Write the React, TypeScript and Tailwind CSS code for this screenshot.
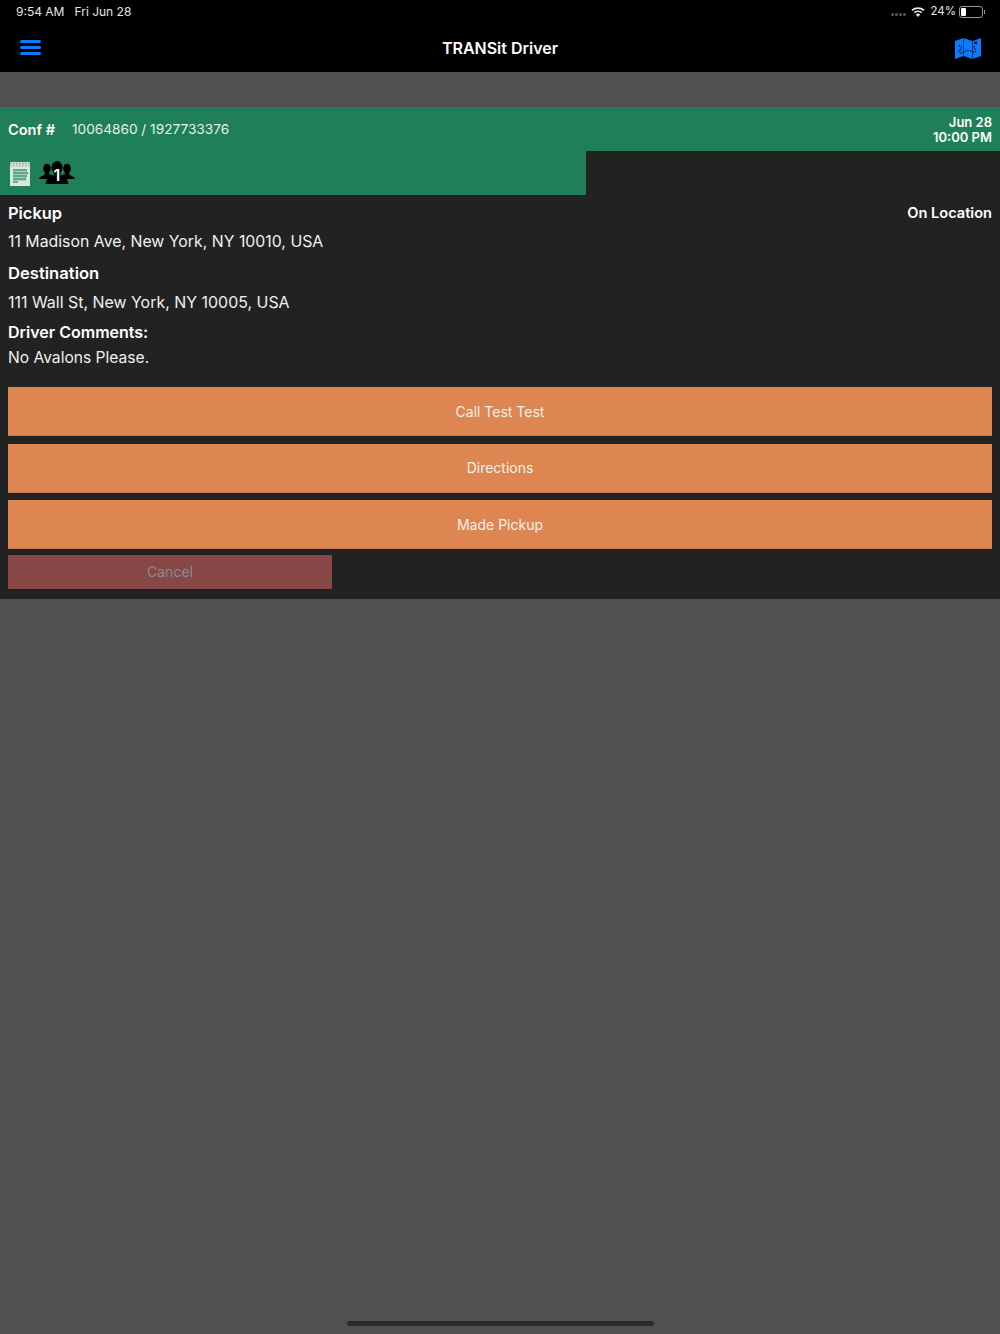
const NotesIcon = () => (
  <svg width="22" height="25" viewBox="0 0 22 25" className="block">
    <rect x="1" y="1" width="20" height="24" fill="#dbe6df" />
    <path d="M1 2.500h20" stroke="#8fa898" strokeWidth="2" strokeDasharray="1.500 1.500" />
    <rect x="1" y="4.500" width="20" height="1" fill="#a9c2b3" />
    <rect x="4" y="8" width="14" height="2.400" fill="#62a886" />
    <rect x="4" y="11" width="15" height="2.400" fill="#62a886" />
    <rect x="4" y="14" width="14" height="2.400" fill="#62a886" />
    <rect x="4" y="17" width="13" height="2.400" fill="#62a886" />
    <rect x="4" y="20" width="5" height="1.800" fill="#62a886" />
  </svg>
);

const PeopleIcon = () => (
  <svg width="36" height="24" viewBox="0 0 36 24" className="block">
    <ellipse cx="8" cy="7.500" rx="3.800" ry="4.800" fill="#000" />
    <path d="M5.800 11v2.500L.5 16.500 0 18h11l3-4-3.800-.5V11z" fill="#000" />
    <ellipse cx="28" cy="7.500" rx="3.800" ry="4.800" fill="#000" />
    <path d="M30.200 11v2.500l5.300 3 .5 1.500H25l-3-4 3.800-.5V11z" fill="#000" />
    <ellipse cx="18" cy="6.500" rx="5.500" ry="6.500" fill="#000" />
    <path d="M14.500 11v3.500L8 18l-1.500 5h23L28 18l-6.500-3.500V11z" fill="#000" />
  </svg>
);

const MapIcon = () => (
  <svg width="26" height="21" viewBox="0 0 26 21" className="block">
    <path d="M0 3 8.300 0v18L0 21z" fill="#0a7cff" />
    <path d="M8.800 0l8.300 3v18l-8.300-3z" fill="#0a7cff" />
    <path d="M17.700 3 26 0v18l-8.300 3z" fill="#0a7cff" />
    <path d="M3.500 8c2.500-1 3.500.5 2.500 2.500s-3 2.500-1.500 4 4-1 6-1.500 4-.5 6 .5 4.500 1.500 4-1-2.500-3-.5-5.500" fill="none" stroke="#04122a" strokeWidth="1.200" strokeDasharray="1.600 1" />
    <path d="M19.500 3.500l2.500 2.500M22 3.500 19.500 6" stroke="#04122a" strokeWidth="1.100" />
  </svg>
);

const WifiIcon = () => (
  <svg width="14" height="10" viewBox="0 0 14 10" className="block">
    <path d="M7 10 4.800 7.400a3.400 3.400 0 0 1 4.400 0z" fill="#e8e8e8" />
    <path d="M3.800 6.300 2.700 5a6.600 6.600 0 0 1 8.600 0l-1.100 1.300a5 5 0 0 0-6.400 0z" fill="#e8e8e8" />
    <path d="M1.700 3.900.5 2.600a10 10 0 0 1 13 0l-1.200 1.300a8.300 8.300 0 0 0-10.600 0z" fill="#e8e8e8" />
  </svg>
);

const ActionButton = ({ label }: { label: string }) => (
  <div className="h-[49px] bg-[#de8651] border-b border-[#c57648] flex items-center justify-center text-[14px] text-[#f4f1ee]">
    {label}
  </div>
);

export default function App() {
  return (
    <div
      className="w-[1000px] h-[1334px] bg-[#505050] flex flex-col relative overflow-hidden text-white"
      style={{ fontFamily: "Inter, 'Liberation Sans', sans-serif" }}
    >
      {/* Top bar */}
      <div className="h-[72px] bg-black shrink-0 flex flex-col">
        <div className="h-[24px] pl-4 pr-[15px] flex items-center justify-between text-[12px] text-[#e6e6e6]">
          <div className="flex gap-[10px]">
            <span>9:54 AM</span>
            <span>Fri Jun 28</span>
          </div>
          <div className="flex items-center">
            <div className="flex gap-[1px] mr-[5px] mt-1">
              <span className="w-[3px] h-[3px] rounded-full bg-[#555]" />
              <span className="w-[3px] h-[3px] rounded-full bg-[#555]" />
              <span className="w-[3px] h-[3px] rounded-full bg-[#555]" />
              <span className="w-[3px] h-[3px] rounded-full bg-[#555]" />
            </div>
            <WifiIcon />
            <span className="ml-[5px] mr-[3px] text-[11.500px]">24%</span>
            <div className="w-[24px] h-[12px] border border-[#9a9a9a] rounded-[3px] p-[1px]">
              <div className="w-[5px] h-full bg-white rounded-[1px]" />
            </div>
            <div className="w-[1px] h-[4px] bg-[#9a9a9a] ml-[1px]" />
          </div>
        </div>
        <div className="flex-1 pl-5 pr-[19px] flex items-center justify-between relative">
          <div className="w-[21px] flex flex-col gap-[3px] mb-[1px]">
            <div className="h-[3px] rounded-full bg-[#0a7cff]" />
            <div className="h-[3px] rounded-full bg-[#0a7cff]" />
            <div className="h-[3px] rounded-full bg-[#0a7cff]" />
          </div>
          <span className="absolute inset-x-0 text-center text-[16px] font-semibold">TRANSit Driver</span>
          <MapIcon />
        </div>
      </div>

      <div className="h-[35px] shrink-0" />

      {/* Trip card */}
      <div className="h-[492px] bg-[#222222] shrink-0">
        <div className="h-[44px] bg-[#1f7f59] pl-2 pr-2 flex items-center justify-between">
          <div className="flex items-center">
            <span className="font-semibold w-[64px] text-[14.500px] pt-[1px]">Conf #</span>
            <span className="text-[13.650px] text-[#e8f0ec]">10064860 / 1927733376</span>
          </div>
          <div className="pt-[1px] text-right text-[13px] font-semibold leading-[15px]">
            <div>Jun 28</div>
            <div>10:00 PM</div>
          </div>
        </div>
        <div className="h-[44px] w-[586px] bg-[#1f7f59] pl-[9px] flex items-center gap-[8px]">
          <NotesIcon />
          <div className="relative">
            <PeopleIcon />
            <span className="absolute inset-0 flex items-center justify-center pt-[3px] text-[16px] font-semibold">1</span>
          </div>
        </div>

        <div className="px-2">
          <div className="flex justify-between items-center h-[36px]">
            <span className="text-[16.400px] font-semibold pt-[1px]">Pickup</span>
            <span className="text-[14.600px] font-semibold pt-[1px]">On Location</span>
          </div>
          <div className="h-[24px] -mt-[1px] flex items-center text-[15.850px] text-[#f0f0f0]">11 Madison Ave, New York, NY 10010, USA</div>
          <div className="h-[36px] mt-[1px] flex items-center text-[16.600px] font-semibold">Destination</div>
          <div className="h-[24px] flex items-center text-[15.950px] text-[#f0f0f0]">111 Wall St, New York, NY 10005, USA</div>
          <div className="h-[24px] mt-[5px] flex items-center text-[16px] font-semibold">Driver Comments:</div>
          <div className="h-[24px] mt-[2px] flex items-center text-[15.600px] text-[#f0f0f0]">No Avalons Please.</div>

          <div className="mt-[17px] flex flex-col gap-[7.500px]">
            <ActionButton label="Call Test Test" />
            <ActionButton label="Directions" />
            <ActionButton label="Made Pickup" />
          </div>
          <div className="mt-[6px] w-[324px] h-[34px] pb-[1px] bg-[#874747] flex items-center justify-center text-[14px] text-[#8d8d8d]">
            Cancel
          </div>
        </div>
      </div>

      {/* Home indicator */}
      <div className="absolute bottom-[8px] left-[347px] w-[307px] h-[5px] rounded-full bg-[#2a2a2a]" />
    </div>
  );
}
